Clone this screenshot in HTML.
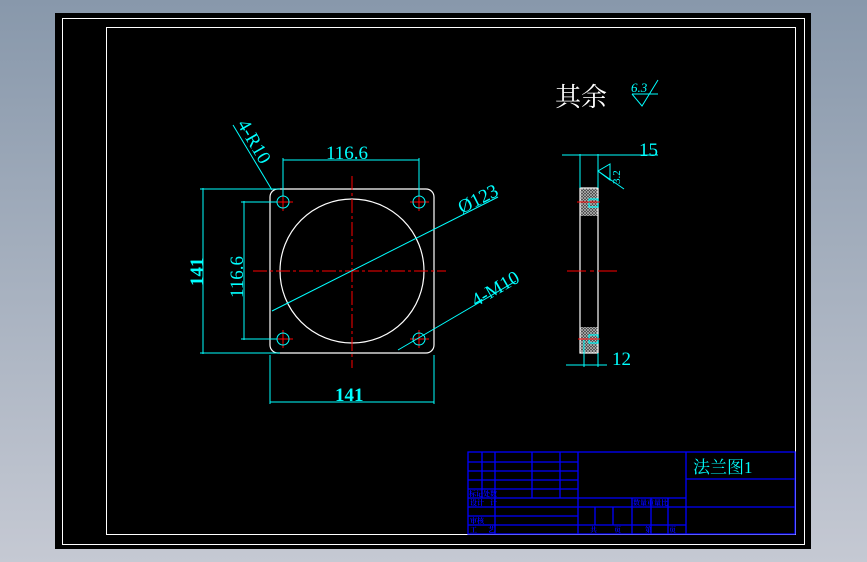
<!DOCTYPE html>
<html><head><meta charset="utf-8"><style>
html,body{margin:0;padding:0;width:867px;height:562px;overflow:hidden;background:linear-gradient(#8898ab,#c5c9d3);}
svg{position:absolute;left:0;top:0}
text{font-family:"Liberation Serif","Noto Serif CJK SC",serif}
</style></head><body>
<svg width="867" height="562" viewBox="0 0 867 562" xmlns="http://www.w3.org/2000/svg">
<defs>
<pattern id="h" width="3" height="3" patternUnits="userSpaceOnUse"><rect width="3" height="3" fill="#333"/><path d="M0 3L3 0M0 0L3 3" stroke="#bbb" stroke-width="0.7"/></pattern>
</defs>
<rect x="55" y="13" width="756" height="536" fill="#000"/>
<rect x="62.5" y="18.5" width="742" height="526" fill="none" stroke="#fff" stroke-width="1"/>
<rect x="106.5" y="27.5" width="689" height="507" fill="none" stroke="#fff" stroke-width="1"/>

<g fill="none" stroke="#fff" stroke-width="1.2">
<rect x="270" y="189" width="164" height="164" rx="8"/>
<circle cx="352" cy="271" r="72"/>
</g>
<g stroke="#f00" stroke-width="1" stroke-dasharray="14 3 3 3">
<line x1="352" y1="176" x2="352" y2="368"/>
<line x1="253" y1="271" x2="446" y2="271"/>
</g>
<g stroke="#f00" stroke-width="1">
<line x1="274" y1="202" x2="293" y2="202"/><line x1="283" y1="193" x2="283" y2="211"/>
<line x1="410" y1="202" x2="429" y2="202"/><line x1="419" y1="193" x2="419" y2="211"/>
<line x1="274" y1="339" x2="293" y2="339"/><line x1="283" y1="330" x2="283" y2="348"/>
<line x1="410" y1="339" x2="429" y2="339"/><line x1="419" y1="330" x2="419" y2="348"/>
</g>
<g fill="none" stroke="#0ff" stroke-width="1">
<circle cx="283" cy="202" r="6"/><circle cx="419" cy="202" r="6"/>
<circle cx="283" cy="339" r="6"/><circle cx="419" cy="339" r="6"/>
<line x1="283" y1="196" x2="283" y2="158"/><line x1="419" y1="196" x2="419" y2="158"/>
<line x1="283" y1="160" x2="419" y2="160"/>
<line x1="203" y1="188" x2="203" y2="354"/><line x1="200" y1="189" x2="280" y2="189"/><line x1="200" y1="353" x2="280" y2="353"/>
<line x1="244" y1="201" x2="244" y2="340"/><line x1="241" y1="202" x2="277" y2="202"/><line x1="241" y1="339" x2="277" y2="339"/>
<line x1="270" y1="355" x2="270" y2="404"/><line x1="434" y1="355" x2="434" y2="404"/>
<line x1="270" y1="402" x2="434" y2="402"/>
<line x1="272" y1="311" x2="498" y2="197"/>
<line x1="398" y1="350" x2="516" y2="281"/>
<line x1="233" y1="125" x2="272" y2="190"/>
</g>
<g fill="#0ff" font-size="19">
<text x="326" y="159">116.6</text>
<text x="335" y="401" font-weight="bold">141</text>
<text transform="translate(203,286) rotate(-90)" font-weight="bold">141</text>
<text transform="translate(243,298) rotate(-90)">116.6</text>
<text transform="translate(462,214) rotate(-27)">Ø123</text>
<text transform="translate(476,307) rotate(-30)">4-M10</text>
<text transform="translate(237,124) rotate(60)">4-R10</text>
<text x="639" y="156">15</text>
<text x="612" y="365">12</text>
</g>

<text x="555" y="106" fill="#fff" font-size="26" font-family="'Noto Sans CJK SC',sans-serif">其余</text>
<g fill="none" stroke="#0ff" stroke-width="1">
<path d="M632 94 L658 94 M632 94 L642 106 L658 80"/>
</g>
<text x="631" y="92" fill="#0ff" font-size="13" font-style="italic">6.3</text>
<rect x="580" y="188" width="18" height="28" fill="url(#h)"/>
<rect x="580" y="327" width="18" height="26" fill="url(#h)"/>
<g fill="none" stroke="#fff" stroke-width="1.2">
<rect x="580" y="188" width="18" height="165"/>
</g>
<g fill="none" stroke="#0ff" stroke-width="1.2">
<rect x="589" y="199" width="9" height="8"/><rect x="589" y="335" width="9" height="8"/>
</g>
<g fill="none" stroke="#0ff" stroke-width="1">
<line x1="562" y1="155" x2="658" y2="155"/>
<line x1="580" y1="154" x2="580" y2="188"/><line x1="598" y1="154" x2="598" y2="188"/>
<line x1="566" y1="365" x2="607" y2="365"/>
<line x1="584" y1="340" x2="584" y2="367"/><line x1="598" y1="353" x2="598" y2="367"/>
<path d="M598 171 L610 164 L610 180 Z M598 171 L624 189"/>
</g>
<text transform="translate(620,184) rotate(-90)" fill="#0ff" font-size="11">3.2</text>
<g stroke="#f00" stroke-width="1">
<line x1="577" y1="202" x2="600" y2="202"/><line x1="578" y1="339" x2="600" y2="339"/>
<line x1="567" y1="271" x2="586" y2="271"/><line x1="590" y1="271" x2="594" y2="271"/><line x1="598" y1="271" x2="617" y2="271"/>
</g>

<g stroke="#00f" stroke-width="1.3" fill="none">
<rect x="468" y="452" width="327" height="82"/>
<line x1="482" y1="452" x2="482" y2="498"/>
<line x1="495" y1="452" x2="495" y2="534"/>
<line x1="532" y1="452" x2="532" y2="498"/>
<line x1="560" y1="452" x2="560" y2="498"/>
<line x1="578" y1="452" x2="578" y2="534"/>
<line x1="632" y1="498" x2="632" y2="534"/>
<line x1="651" y1="498" x2="651" y2="534"/>
<line x1="668" y1="498" x2="668" y2="534"/>
<line x1="686" y1="452" x2="686" y2="534"/>
<line x1="595" y1="507" x2="595" y2="525"/>
<line x1="613" y1="507" x2="613" y2="525"/>
<line x1="468" y1="462" x2="578" y2="462"/>
<line x1="468" y1="471" x2="578" y2="471"/>
<line x1="468" y1="480" x2="578" y2="480"/>
<line x1="468" y1="489" x2="578" y2="489"/>
<line x1="468" y1="498" x2="686" y2="498"/>
<line x1="468" y1="507" x2="795" y2="507"/>
<line x1="468" y1="516" x2="578" y2="516"/>
<line x1="468" y1="525" x2="686" y2="525"/>
<line x1="686" y1="479" x2="795" y2="479"/>
</g>
<g fill="#00f" font-size="7" font-family="'Noto Sans CJK SC',sans-serif" font-weight="bold">
<text x="469" y="496">标记处数</text>
<text x="470" y="505">设计</text><text x="490" y="505">计</text>
<text x="470" y="523">审核</text><text x="470" y="532">工</text><text x="488" y="532">艺</text>
<text x="633" y="505">数量重量比</text>
<text x="590" y="532">共</text><text x="614" y="532">页</text><text x="645" y="532">第</text><text x="669" y="532">页</text>
</g>
<text x="693" y="473" fill="#0ff" font-size="17" font-family="'Noto Sans CJK SC',sans-serif">法兰图1</text>
</svg>
</body></html>
